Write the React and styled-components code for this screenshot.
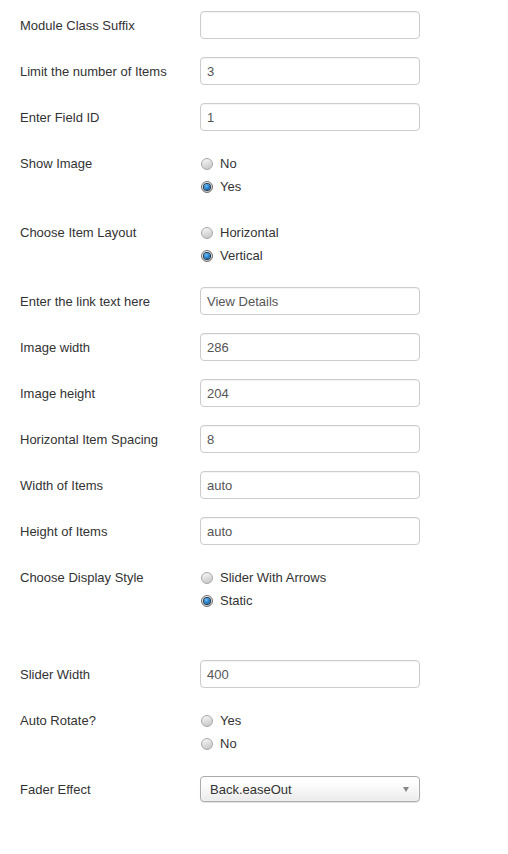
import styled, { createGlobalStyle } from "styled-components";

const GlobalStyle = createGlobalStyle`
  body {
    margin: 0;
    background: #fff;
    font-family: "Liberation Sans", Arial, sans-serif;
    font-size: 13px;
    color: #333;
  }
`;

const Form = styled.div`
  padding: 11px 0 40px;
  width: 508px;
`;

const Row = styled.div`
  display: flex;
  align-items: flex-start;
  margin-bottom: 18px;
`;

const Label = styled.div`
  width: 180px;
  padding: 1px 0 0 20px;
  line-height: 27px;
  color: #333;
`;

const TextInput = styled.div`
  box-sizing: border-box;
  width: 220px;
  height: 28px;
  border: 1px solid #ccc;
  border-radius: 4px;
  padding: 1px 6px 0;
  line-height: 25px;
  color: #555;
  box-shadow: inset 0 1px 1px rgba(0, 0, 0, 0.05);
`;

const RadioGroup = styled.div`
  padding: 3px 0 2px;
`;

const RadioLine = styled.div`
  display: flex;
  align-items: center;
  height: 23px;
  color: #333;
`;

const RadioDot = styled.span`
  box-sizing: border-box;
  width: 12px;
  height: 12px;
  margin: 0 7px 0 1px;
  border-radius: 50%;
  border: 1px solid ${(p) => (p.$checked ? "#707070" : "#a8a8a8")};
  background: linear-gradient(160deg, #f4f4f4 10%, #d8d8d8 60%, #c4c4c4 100%);
  display: flex;
  align-items: center;
  justify-content: center;

  &::after {
    content: "";
    display: ${(p) => (p.$checked ? "block" : "none")};
    width: 6px;
    height: 6px;
    border-radius: 50%;
    background: radial-gradient(circle at 40% 35%, #6cc0f8 0%, #1f78c4 55%, #0c3f72 100%);
    box-shadow: 0 0 0 1px #22384f;
  }
`;

const Spacer = styled.div`
  height: 28px;
`;

const Select = styled.div`
  box-sizing: border-box;
  width: 220px;
  height: 26px;
  margin-top: 1px;
  border: 1px solid #aaa;
  border-radius: 4px;
  padding: 1px 8px 0 9px;
  display: flex;
  align-items: center;
  justify-content: space-between;
  color: #333;
  background: linear-gradient(#ffffff 20%, #f0f0f0 80%, #e8e8e8);
  box-shadow: 0 0 3px #fff inset, 0 1px 1px rgba(0, 0, 0, 0.1);
`;

const Arrow = styled.span`
  width: 0;
  height: 0;
  margin-right: 2px;
  border-left: 3.5px solid transparent;
  border-right: 3.5px solid transparent;
  border-top: 5px solid #888;
`;

const Field = ({ label, value = "" }) => (
  <Row>
    <Label>{label}</Label>
    <TextInput>{value}</TextInput>
  </Row>
);

const Radios = ({ label, options, checked }) => (
  <Row>
    <Label>{label}</Label>
    <RadioGroup>
      {options.map((o) => (
        <RadioLine key={o}>
          <RadioDot $checked={o === checked} />
          {o}
        </RadioLine>
      ))}
    </RadioGroup>
  </Row>
);

export default function App() {
  return (
    <Form>
      <GlobalStyle />
      <Field label="Module Class Suffix" />
      <Field label="Limit the number of Items" value="3" />
      <Field label="Enter Field ID" value="1" />
      <Radios label="Show Image" options={["No", "Yes"]} checked="Yes" />
      <Radios label="Choose Item Layout" options={["Horizontal", "Vertical"]} checked="Vertical" />
      <Field label="Enter the link text here" value="View Details" />
      <Field label="Image width" value="286" />
      <Field label="Image height" value="204" />
      <Field label="Horizontal Item Spacing" value="8" />
      <Field label="Width of Items" value="auto" />
      <Field label="Height of Items" value="auto" />
      <Radios label="Choose Display Style" options={["Slider With Arrows", "Static"]} checked="Static" />
      <Spacer />
      <Field label="Slider Width" value="400" />
      <Radios label="Auto Rotate?" options={["Yes", "No"]} />
      <Row>
        <Label>Fader Effect</Label>
        <Select>
          Back.easeOut
          <Arrow />
        </Select>
      </Row>
    </Form>
  );
}
